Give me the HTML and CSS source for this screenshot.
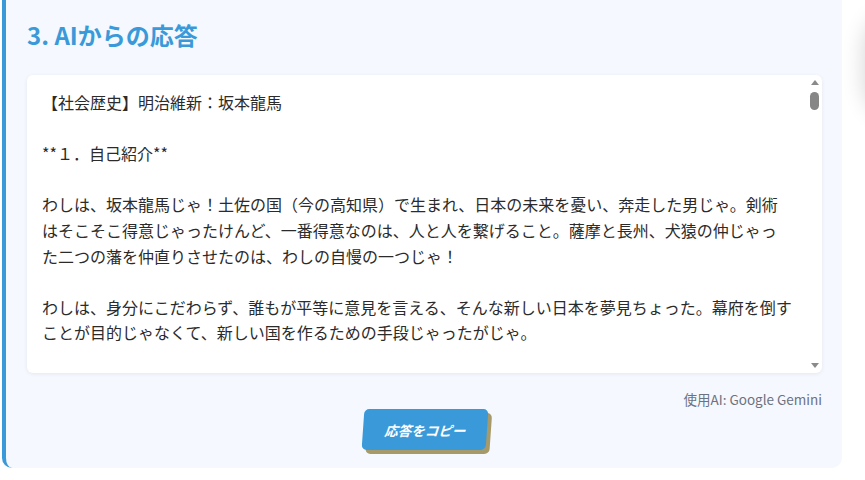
FILE: index.html
```html
<!DOCTYPE html>
<html lang="ja">
<head>
<meta charset="utf-8">
<title>AIからの応答</title>
<link rel="stylesheet" href="styles.css">
</head>
<body>
<div class="page">
  <section class="card">
    <h2 class="card-title">3. AIからの応答</h2>
    <div class="response-box">
      <div class="response-text">【社会歴史】明治維新：坂本龍馬

**１．自己紹介**

わしは、坂本龍馬じゃ！土佐の国（今の高知県）で生まれ、日本の未来を憂い、奔走した男じゃ。剣術はそこそこ得意じゃったけんど、一番得意なのは、人と人を繋げること。薩摩と長州、犬猿の仲じゃった&#8288;二つの藩を仲直りさせたのは、わしの自慢の一つじゃ！

わしは、身分にこだわらず、誰もが平等に意見を言える、そんな新しい日本を夢見ちょった。幕府を倒すことが目的じゃなくて、新しい国を作るための手段じゃったがじゃ。</div>
      <div class="scrollbar" aria-hidden="true">
        <span class="sb-arrow sb-up"></span>
        <span class="sb-thumb"></span>
        <span class="sb-arrow sb-down"></span>
      </div>
    </div>
    <p class="model-note">使用AI: Google Gemini</p>
    <div class="actions">
      <button class="copy-btn" type="button"><span>応答をコピー</span></button>
    </div>
  </section>
  <div class="side-shadow" aria-hidden="true"></div>
</div>
</body>
</html>
```
FILE: styles.css
```css
* { box-sizing: border-box; }
html, body {
  margin: 0;
  padding: 0;
  background: #ffffff;
  overflow: hidden;
}
body {
  font-family: "Noto Sans CJK JP", "Noto Sans", sans-serif;
  color: #333;
}
.page {
  position: relative;
  width: 865px;
  height: 480px;
  padding-left: 2px;
  overflow: hidden;
}
.card {
  width: 840px;
  background: #f5f8fe;
  border-left: 4px solid #3a9ad9;
  border-radius: 0 0 10px 10px;
  padding: 19px 20px 18px 21px;
}
.card-title {
  margin: 0 0 24px 0;
  font-size: 24px;
  line-height: 32px;
  font-weight: 700;
  color: #3a9ad9;
}
.response-box {
  position: relative;
  height: 298px;
  background: #ffffff;
  border-radius: 6px;
  box-shadow: 0 1px 4px rgba(0, 0, 0, 0.07);
  overflow: hidden;
}
.response-text {
  height: 100%;
  padding: 15px 29px 0 15px;
  font-size: 16px;
  line-height: 1.6;
  color: #2b2b2b;
  white-space: pre-wrap;
  overflow: hidden;
}
.scrollbar {
  position: absolute;
  top: 0;
  right: 0;
  width: 15px;
  height: 100%;
  display: flex;
  flex-direction: column;
  align-items: center;
  padding: 5px 0 5px 0;
}
.sb-arrow {
  width: 0;
  height: 0;
  border-left: 4px solid transparent;
  border-right: 4px solid transparent;
}
.sb-up {
  border-bottom: 5px solid #8a8a8a;
}
.sb-down {
  border-top: 5px solid #8a8a8a;
  margin-top: auto;
}
.sb-thumb {
  width: 9px;
  height: 18px;
  margin-top: 7px;
  border-radius: 5px;
  background: #868686;
}
.model-note {
  margin: 17px 0 0 0;
  text-align: right;
  font-size: 13.5px;
  line-height: 19px;
  color: #6b7280;
}
.actions {
  display: flex;
  justify-content: center;
}
.copy-btn {
  width: 124px;
  height: 41px;
  border: none;
  border-radius: 5px;
  background: #3a9ad9;
  color: #ffffff;
  font-family: "Noto Sans CJK JP", "Noto Sans", sans-serif;
  font-size: 13.5px;
  font-weight: 700;
  font-style: italic;
  box-shadow: 4px 4px 0 #a6996a;
  transform: skewX(-4deg);
  cursor: pointer;
}
.side-shadow {
  position: absolute;
  left: 872px;
  top: 18px;
  width: 60px;
  height: 95px;
  border-radius: 30px;
  box-shadow: 0 0 22px 8px rgba(0, 0, 0, 0.16);
}
```
